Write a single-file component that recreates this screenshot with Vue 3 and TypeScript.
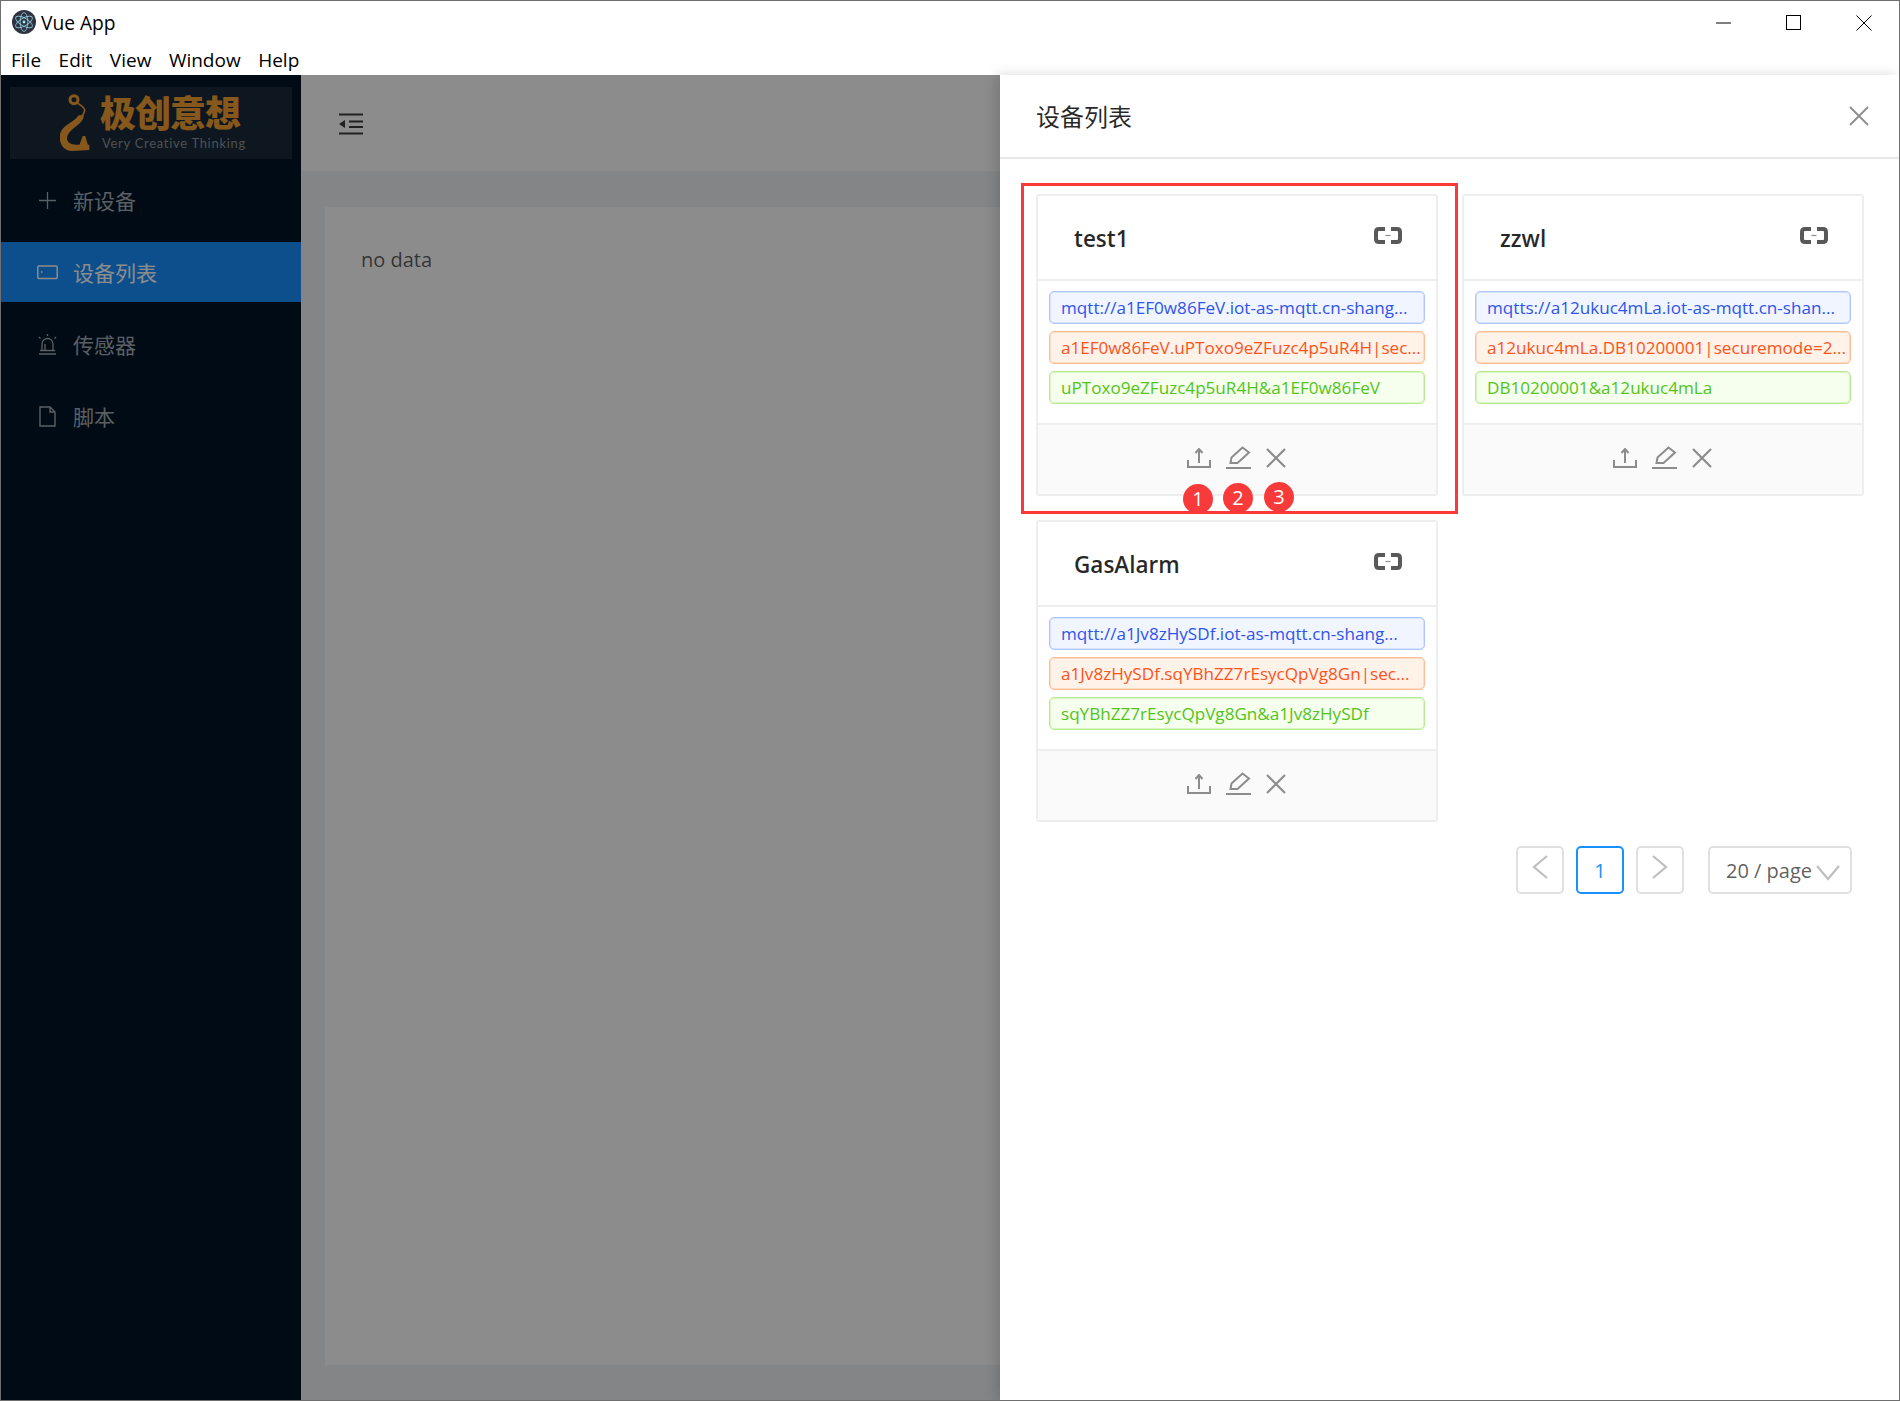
<script setup lang="ts">
interface Device { name: string; url: string; client: string; user: string }
const devices: Device[] = [
  { name: 'test1', url: 'mqtt://a1EF0w86FeV.iot-as-mqtt.cn-shang...', client: 'a1EF0w86FeV.uPToxo9eZFuzc4p5uR4H|sec...', user: 'uPToxo9eZFuzc4p5uR4H&a1EF0w86FeV' },
  { name: 'zzwl', url: 'mqtts://a12ukuc4mLa.iot-as-mqtt.cn-shan...', client: 'a12ukuc4mLa.DB10200001|securemode=2...', user: 'DB10200001&a12ukuc4mLa' },
  { name: 'GasAlarm', url: 'mqtt://a1Jv8zHySDf.iot-as-mqtt.cn-shang...', client: 'a1Jv8zHySDf.sqYBhZZ7rEsycQpVg8Gn|sec...', user: 'sqYBhZZ7rEsycQpVg8Gn&a1Jv8zHySDf' },
]
const menus = ['File', 'Edit', 'View', 'Window', 'Help']
const badges = [
  { n: 1, x: 1198, y: 424 },
  { n: 2, x: 1238, y: 423 },
  { n: 3, x: 1279, y: 422 },
]
</script>

<template>
  <div class="window">
    <header class="titlebar">
      <div class="title-left">
        <svg class="app-icon" width="24" height="24" viewBox="0 0 24 24">
          <circle cx="12" cy="12" r="12" fill="#2f3241" />
          <g fill="none" stroke="#9feaf9" stroke-opacity=".75" stroke-width=".9">
            <ellipse cx="12" cy="12" rx="9.5" ry="3.8" transform="rotate(30 12 12)" />
            <ellipse cx="12" cy="12" rx="9.5" ry="3.8" transform="rotate(90 12 12)" />
            <ellipse cx="12" cy="12" rx="9.5" ry="3.8" transform="rotate(150 12 12)" />
          </g>
          <circle cx="12" cy="12" r="1.4" fill="#9feaf9" />
        </svg>
        <span>Vue App</span>
      </div>
      <div class="win-controls">
        <svg width="16" height="16" viewBox="0 0 16 16"><path d="M0 8h15" stroke="#000" fill="none" /></svg>
        <svg width="16" height="16" viewBox="0 0 16 16"><rect x=".5" y=".5" width="14" height="14" stroke="#000" fill="none" /></svg>
        <svg width="16" height="16" viewBox="0 0 16 16"><path d="M.5.5l15 15M15.500.5l-15 15" stroke="#000" fill="none" /></svg>
      </div>
    </header>
    <nav class="menubar">
      <span v-for="m in menus" :key="m">{{ m }}</span>
    </nav>

    <div class="body">
      <aside class="sider">
        <div class="logo">
          <svg class="hook" width="30" height="60" viewBox="60 15 90 180">
            <circle cx="102" cy="35" r="12" fill="none" stroke="#f4a033" stroke-width="9" />
            <path d="M112 45c8 6 22 12 22 22 0 8-6 14-12 22" fill="none" stroke="#f4a033" stroke-width="5" />
            <path d="M116 82h16c-4 30-40 36-50 62-5 16 8 26 26 26h40v16l-52 3c-24 0-40-22-36-48 6-32 42-36 56-59z" fill="#f4a033" />
            <path d="M118 172l10-28h8l8 28z" fill="#f4a033" />
          </svg>
          <div class="logo-text">
            <span class="logo-cn">极创意想</span>
            <span class="logo-en">Very Creative Thinking</span>
          </div>
        </div>
        <ul class="menu">
          <li class="item">
            <svg width="21" height="21" viewBox="0 0 21 21"><path d="M10.500 2v17M2 10.500h17" stroke="currentColor" stroke-width="1.300" fill="none" /></svg>
            <span>新设备</span>
          </li>
          <li class="item active">
            <svg width="21" height="21" viewBox="0 0 21 21"><rect x=".8" y="4" width="19.400" height="12.500" rx="1" stroke="currentColor" stroke-width="1.500" fill="none" /><path d="M4 10h1.500" stroke="currentColor" stroke-width="1.500" /></svg>
            <span>设备列表</span>
          </li>
          <li class="item">
            <svg width="21" height="23" viewBox="0 0 21 23"><path d="M5 17v-6a5.500 5.500 0 0 1 11 0v6M2 21h17M3 17.500h15M10.500 1v2M2 4l1.500 1.500M19 4l-1.500 1.500M8 17v-6" stroke="currentColor" stroke-width="1.300" fill="none" /></svg>
            <span>传感器</span>
          </li>
          <li class="item">
            <svg width="21" height="21" viewBox="0 0 21 21"><path d="M3 1h10l5 5v14H3zM13 1v5h5" stroke="currentColor" stroke-width="1.400" fill="none" /></svg>
            <span>脚本</span>
          </li>
        </ul>
      </aside>

      <main class="main">
        <div class="main-header">
          <svg width="26" height="22" viewBox="0 0 26 22"><path d="M1 1.500h24M11 8.500h14M11 14h14M1 20.500h24" stroke="#3d3d3d" stroke-width="2" fill="none" /><path d="M1 11l6-4v8z" fill="#3d3d3d" /></svg>
        </div>
        <div class="main-content">
          <div class="main-card">no data</div>
        </div>
      </main>

      <div class="mask"></div>

      <section class="drawer">
        <div class="drawer-header">
          <span class="drawer-title">设备列表</span>
          <svg width="20" height="20" viewBox="0 0 20 20"><path d="M1 1l18 18M19 1L1 19" stroke="#8c8c8c" stroke-width="1.800" fill="none" /></svg>
        </div>
        <div class="drawer-body">
          <div class="grid">
            <article v-for="d in devices" :key="d.name" class="card">
              <div class="card-head">
                <span class="card-title">{{ d.name }}</span>
                <svg class="link" width="28" height="17" viewBox="0 0 28 17">
                  <path d="M11 2H5C3 2 2 3 2 5v7c0 2 1 3 3 3h6M17 2h6c2 0 3 1 3 3v7c0 2-1 3-3 3h-6" stroke="#595959" stroke-width="4" fill="none" />
                  <path d="M11.500 8.500h5" stroke="#8c8c8c" stroke-width="1.200" />
                </svg>
              </div>
              <div class="card-body">
                <div class="tag blue">{{ d.url }}</div>
                <div class="tag volcano">{{ d.client }}</div>
                <div class="tag green">{{ d.user }}</div>
              </div>
              <div class="card-foot">
                <svg width="24" height="20" viewBox="0 0 24 20"><path d="M12 1v14M8.500 5L12 1l3.500 4M1 12v7h22v-7" stroke="#8c8c8c" stroke-width="2" fill="none" /></svg>
                <svg width="25" height="23" viewBox="0 0 25 23"><path d="M4.500 17l1-5.500L16.500 1.500 23 6.500 11.500 17zM0 22h25" stroke="#8c8c8c" stroke-width="2" fill="none" /></svg>
                <svg width="20" height="20" viewBox="0 0 20 20"><path d="M1 1l18 18M19 1L1 19" stroke="#8c8c8c" stroke-width="2.200" fill="none" /></svg>
              </div>
            </article>
          </div>
          <div class="pager">
            <button class="page-btn">
              <svg width="16" height="24" viewBox="0 0 16 24"><path d="M15 1L2 12l13 11" stroke="#bfbfbf" stroke-width="2.200" fill="none" /></svg>
            </button>
            <button class="page-btn current">1</button>
            <button class="page-btn">
              <svg width="16" height="24" viewBox="0 0 16 24"><path d="M1 1l13 11L1 23" stroke="#bfbfbf" stroke-width="2.200" fill="none" /></svg>
            </button>
            <div class="page-size">
              <span>20 / page</span>
              <svg width="24" height="16" viewBox="0 0 24 16"><path d="M1 1l11 13L23 1" stroke="#bfbfbf" stroke-width="2.200" fill="none" /></svg>
            </div>
          </div>
        </div>

        <div class="annotation"></div>
        <span
          v-for="b in badges"
          :key="b.n"
          class="badge"
          :style="{ left: b.x - 1000 - 15 + 'px', top: b.y - 15 + 'px' }"
        >{{ b.n }}</span>
      </section>
    </div>
  </div>
</template>

<style>
html, body { margin: 0; padding: 0; }
</style>

<style scoped>
.window {
  width: 1900px;
  height: 1401px;
  box-sizing: border-box;
  border: 1px solid #6f6f6f;
  display: flex;
  flex-direction: column;
  overflow: hidden;
  background: #fff;
  font-family: "Open Sans", "Noto Sans CJK SC", sans-serif;
}
.titlebar {
  height: 42px;
  display: flex;
  align-items: center;
  justify-content: space-between;
  flex: none;
  color: #000;
  font-size: 19.200px;
}
.title-left { display: flex; align-items: center; gap: 5px; padding-left: 11px; }
.app-icon { display: block; }
.win-controls { display: flex; gap: 54px; padding-right: 27px; margin-top: 1px; }
.win-controls svg { display: block; }
.menubar {
  height: 32px;
  flex: none;
  display: flex;
  align-items: center;
  gap: 17.500px;
  padding-left: 10px;
  font-size: 19px;
  color: #000;
  padding-top: 2px;
  box-sizing: border-box;
}
.body { position: relative; flex: 1; display: flex; min-height: 0; }
.sider { width: 300px; flex: none; background: #001529; color: #9aa3ab; }
.logo {
  height: 72px;
  margin: 12px 9px 0;
  background: #1a2a39;
  display: flex;
  align-items: center;
  gap: 10px;
  padding-left: 50px;
}
.hook { flex: none; }
.logo-text { display: flex; flex-direction: column; align-items: flex-start; }
.logo-cn { color: #f4a033; font-weight: 900; font-size: 36px; line-height: 36px; letter-spacing: -1px; }
.logo-en { color: #8b949c; font-family: "Lato", sans-serif; font-size: 13px; line-height: 15px; letter-spacing: .7px; white-space: nowrap; margin-top: 4px; margin-left: 2px; }
.menu { list-style: none; margin: 11px 0 0; padding: 0; display: flex; flex-direction: column; gap: 12px; }
.item { height: 60px; display: flex; align-items: center; gap: 15px; padding-left: 36px; font-size: 21px; color: #a6adb4; }
.item svg { flex: none; }
.item.active { background: #1890ff; color: #fff; }
.main { flex: 1; display: flex; flex-direction: column; min-width: 0; background: #f0f2f5; }
.main-header { height: 96px; flex: none; background: #fff; display: flex; align-items: center; padding: 2px 0 0 37px; box-sizing: border-box; }
.main-content { flex: 1; padding: 36px 24px 35px; display: flex; min-height: 0; }
.main-card { flex: 1; background: #fff; padding: 39px 36px; font-size: 20px; color: rgba(0, 0, 0, .65); line-height: 28px; }
.mask { position: absolute; inset: 0; background: rgba(0, 0, 0, .45); }
.drawer {
  position: absolute;
  top: 0;
  right: 0;
  bottom: 0;
  width: 899px;
  background: #fff;
  box-shadow: -4px 0 12px rgba(0, 0, 0, .15);
}
.drawer-header {
  height: 84px;
  box-sizing: border-box;
  border-bottom: 2px solid #e8e8e8;
  display: flex;
  align-items: center;
  justify-content: space-between;
  padding: 0 30px 0 36px;
}
.drawer-title { font-size: 24px; color: rgba(0, 0, 0, .85); font-weight: 400; margin-top: -2px; }
.drawer-body { padding: 35px 35px 0 36px; }
.grid { display: grid; grid-template-columns: 402px 402px; column-gap: 24px; row-gap: 24px; align-items: start; }
.card { height: 302px; box-sizing: border-box; border: 2px solid #eeeeee; border-radius: 3px; display: flex; flex-direction: column; background: #fff; }
.card-head { height: 85px; flex: none; box-sizing: border-box; border-bottom: 2px solid #eeeeee; display: flex; align-items: center; justify-content: space-between; padding: 0 34px 0 36px; }
.card-title { font-size: 22.500px; font-weight: 600; color: rgba(0, 0, 0, .85); margin-top: 2px; }
.link { margin-top: -5px; display: block; }
.card-body { flex: 1; padding: 10px 11px 0 11px; display: flex; flex-direction: column; gap: 7px; }
.tag { height: 33px; box-sizing: border-box; border: 1px solid; border-radius: 5px; padding: 0 11px; font-size: 17.100px; line-height: 32px; white-space: nowrap; overflow: hidden; }
.tag.blue { color: #2f54eb; background: #f0f5ff; border-color: #adc6ff; box-shadow: inset 0 0 0 1px #d6e2ff; }
.tag.volcano { color: #fa541c; background: #fff2e8; border-color: #ffbb96; box-shadow: inset 0 0 0 1px #ffdcc4; }
.tag.green { color: #52c41a; background: #f6ffed; border-color: #b7eb8f; box-shadow: inset 0 0 0 1px #dcf5c4; }
.card-foot { height: 71px; flex: none; box-sizing: border-box; border-top: 2px solid #eeeeee; background: #fafafa; display: flex; align-items: center; justify-content: center; gap: 15px; padding: 0 1px 4px 0; }
.card-foot svg { display: block; }
.pager { display: flex; justify-content: flex-end; align-items: center; gap: 12px; margin-top: 24px; padding-right: 12px; }
.page-btn { width: 48px; height: 48px; box-sizing: border-box; border: 2px solid #e0e0e0; border-radius: 5px; background: #fff; padding: 0; display: flex; align-items: center; justify-content: center; font-family: inherit; font-size: 20px; color: #1890ff; }
.page-btn svg { margin-top: -7px; }
.page-btn.current { border-color: #1890ff; }
.page-size { width: 144px; height: 48px; box-sizing: border-box; border: 2px solid #e0e0e0; border-radius: 5px; margin-left: 12px; display: flex; align-items: center; gap: 4px; padding-left: 16px; font-size: 20px; color: rgba(0, 0, 0, .65); white-space: nowrap; }
.page-size svg { flex: none; margin-top: 6px; }
.annotation { position: absolute; left: 21px; top: 108px; width: 437px; height: 331px; box-sizing: border-box; border: 3px solid #f93a3a; pointer-events: none; }
.badge { position: absolute; width: 30px; height: 30px; border-radius: 50%; background: #f93a3a; color: #fff; font-size: 20px; line-height: 30px; text-align: center; }
</style>
